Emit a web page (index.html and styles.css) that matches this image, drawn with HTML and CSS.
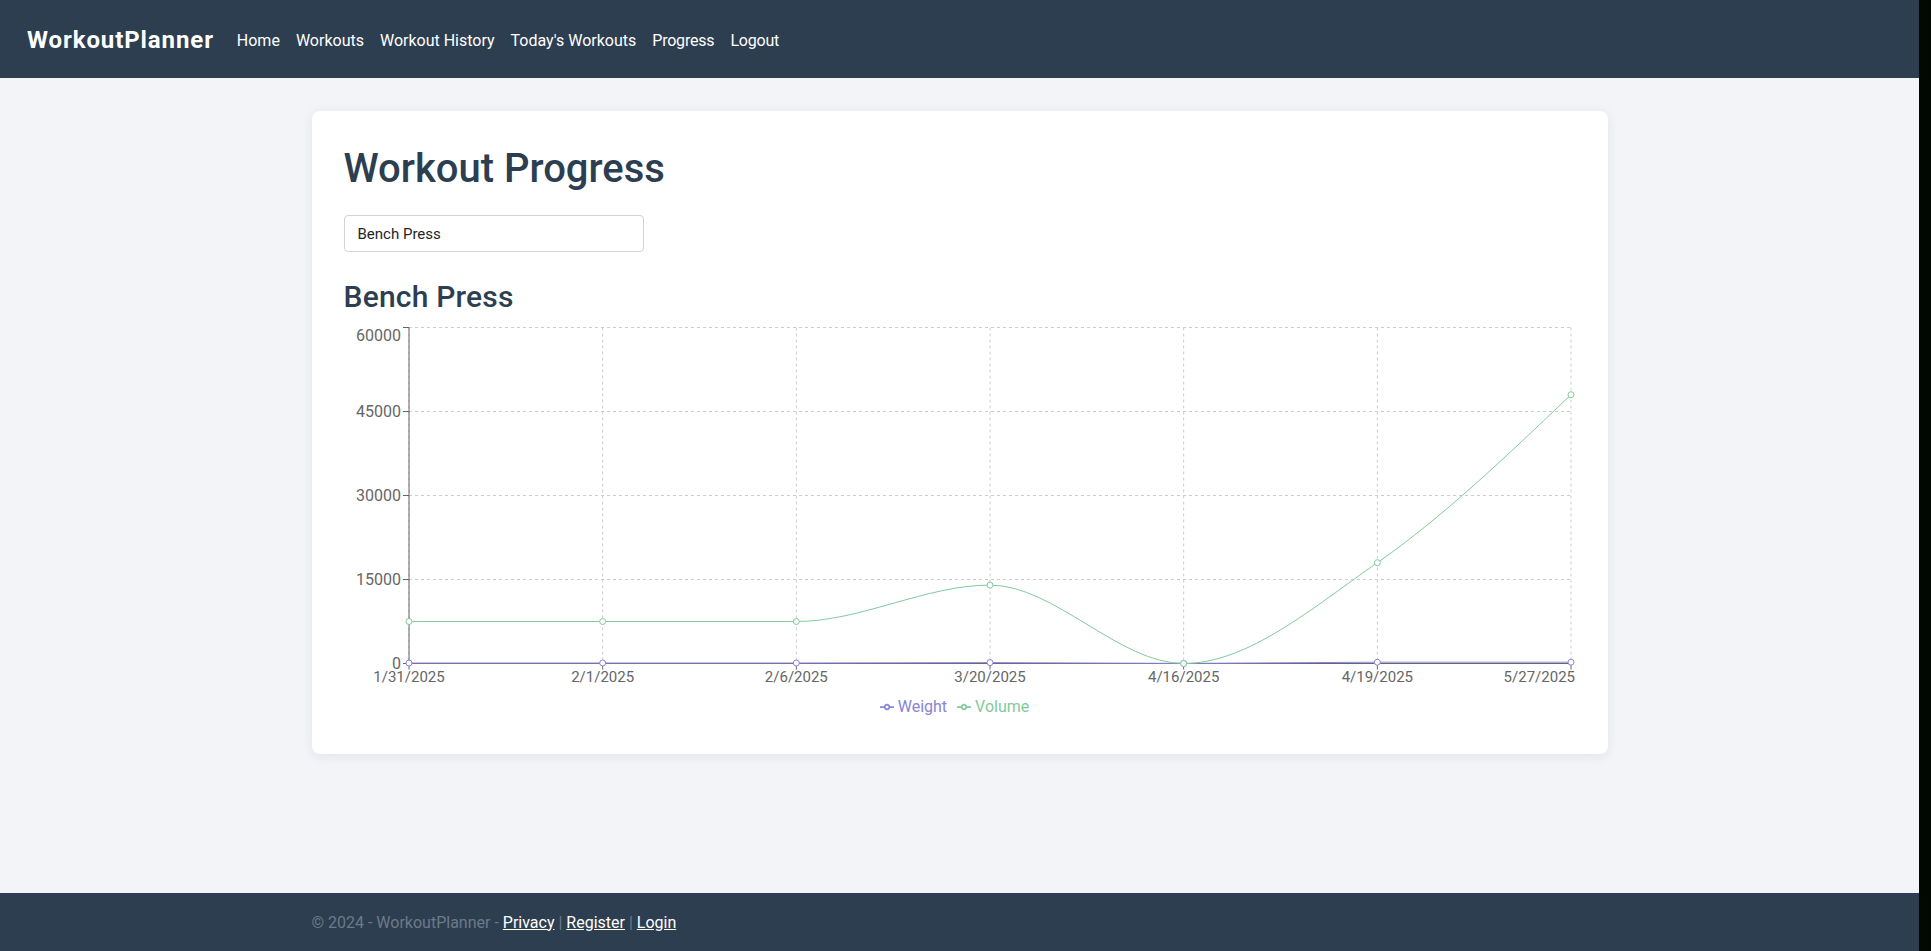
FILE: index.html
```html
<!DOCTYPE html>
<html lang="en">
<head>
<meta charset="utf-8">
<title>Progress - WorkoutPlanner</title>
<link rel="stylesheet" href="styles.css">
</head>
<body>
<div class="page">
  <header class="topbar">
    <a class="brand" href="#">WorkoutPlanner</a>
    <nav class="nav">
      <a href="#">Home</a>
      <a href="#">Workouts</a>
      <a href="#">Workout History</a>
      <a href="#">Today's Workouts</a>
      <a href="#">Progress</a>
      <a href="#">Logout</a>
    </nav>
  </header>

  <main class="main">
    <section class="card">
      <h1 class="title">Workout Progress</h1>
      <div class="select">Bench Press</div>
      <h3 class="subtitle">Bench Press</h3>

      <div class="chart">
        <svg class="chart-svg" width="1232" height="371" viewBox="0 0 1232 371">
          <g class="grid">
            <line x1="65" y1="5.5" x2="1227" y2="5.5"/>
            <line x1="65" y1="89.5" x2="1227" y2="89.5"/>
            <line x1="65" y1="173.5" x2="1227" y2="173.5"/>
            <line x1="65" y1="257.5" x2="1227" y2="257.5"/>
            <line x1="65" y1="341.5" x2="1227" y2="341.5"/>
            <line x1="65" y1="5.5" x2="65" y2="341.5"/>
            <line x1="258.67" y1="5.5" x2="258.67" y2="341.5"/>
            <line x1="452.33" y1="5.5" x2="452.33" y2="341.5"/>
            <line x1="646" y1="5.5" x2="646" y2="341.5"/>
            <line x1="839.67" y1="5.5" x2="839.67" y2="341.5"/>
            <line x1="1033.33" y1="5.5" x2="1033.33" y2="341.5"/>
            <line x1="1227" y1="5.5" x2="1227" y2="341.5"/>
          </g>

          <g class="axis">
            <line x1="65" y1="341.5" x2="1227" y2="341.5"/>
            <line x1="65" y1="347.5" x2="65" y2="341.5"/>
            <line x1="258.67" y1="347.5" x2="258.67" y2="341.5"/>
            <line x1="452.33" y1="347.5" x2="452.33" y2="341.5"/>
            <line x1="646" y1="347.5" x2="646" y2="341.5"/>
            <line x1="839.67" y1="347.5" x2="839.67" y2="341.5"/>
            <line x1="1033.33" y1="347.5" x2="1033.33" y2="341.5"/>
            <line x1="1227" y1="347.5" x2="1227" y2="341.5"/>

            <line x1="65" y1="5.5" x2="65" y2="341.5"/>
            <line x1="59" y1="341.5" x2="65" y2="341.5"/>
            <line x1="59" y1="257.5" x2="65" y2="257.5"/>
            <line x1="59" y1="173.5" x2="65" y2="173.5"/>
            <line x1="59" y1="89.5" x2="65" y2="89.5"/>
            <line x1="59" y1="5.5" x2="65" y2="5.5"/>
          </g>

          <g class="ticks x-ticks">
            <text x="65" y="349.5" dy="0.71em">1/31/2025</text>
            <text x="258.67" y="349.5" dy="0.71em">2/1/2025</text>
            <text x="452.33" y="349.5" dy="0.71em">2/6/2025</text>
            <text x="646" y="349.5" dy="0.71em">3/20/2025</text>
            <text x="839.67" y="349.5" dy="0.71em">4/16/2025</text>
            <text x="1033.33" y="349.5" dy="0.71em">4/19/2025</text>
            <text class="tick-end" x="1231" y="349.5" dy="0.71em">5/27/2025</text>
          </g>

          <g class="ticks y-ticks">
            <text x="57" y="341.5" dy="0.355em">0</text>
            <text x="57" y="257.5" dy="0.355em">15000</text>
            <text x="57" y="173.5" dy="0.355em">30000</text>
            <text x="57" y="89.5" dy="0.355em">45000</text>
            <text x="57" y="13" dy="0.355em">60000</text>
          </g>

          <path class="line-weight" d="M65,341 L258.67,341 L452.33,341 L646,340.6 L839.67,341.4 L1033.33,340.2 L1227,340.2"/>
          <g class="dots-weight">
            <circle cx="65" cy="341" r="3"/>
            <circle cx="258.67" cy="341" r="3"/>
            <circle cx="452.33" cy="341" r="3"/>
            <circle cx="646" cy="340.6" r="3"/>
            <circle cx="839.67" cy="341.4" r="3"/>
            <circle cx="1033.33" cy="340.2" r="3"/>
            <circle cx="1227" cy="340.2" r="3"/>
          </g>

          <path class="line-volume" d="M65,299.5 C129.56,299.5 194.11,299.5 258.67,299.5 C323.22,299.5 387.78,299.5 452.33,299.5 C516.89,299.5 581.44,263.1 646,263.1 C710.56,263.1 775.11,341.5 839.67,341.5 C904.22,341.5 968.78,285.5 1033.33,240.7 C1097.89,195.9 1162.44,134.3 1227,72.7"/>
          <g class="dots-volume">
            <circle cx="65" cy="299.5" r="3"/>
            <circle cx="258.67" cy="299.5" r="3"/>
            <circle cx="452.33" cy="299.5" r="3"/>
            <circle cx="646" cy="263.1" r="3"/>
            <circle cx="839.67" cy="341.5" r="3"/>
            <circle cx="1033.33" cy="240.7" r="3"/>
            <circle cx="1227" cy="72.7" r="3"/>
          </g>
        </svg>

        <ul class="legend">
          <li class="legend-item legend-weight">
            <svg class="legend-icon" width="14" height="14" viewBox="0 0 32 32"><path d="M0,16h10.67A5.33,5.33,0,1,1,21.33,16H32M21.33,16A5.33,5.33,0,1,1,10.67,16"/></svg>
            <span>Weight</span>
          </li>
          <li class="legend-item legend-volume">
            <svg class="legend-icon" width="14" height="14" viewBox="0 0 32 32"><path d="M0,16h10.67A5.33,5.33,0,1,1,21.33,16H32M21.33,16A5.33,5.33,0,1,1,10.67,16"/></svg>
            <span>Volume</span>
          </li>
        </ul>
      </div>
    </section>
  </main>

  <footer class="footer">
    <div class="footer-inner"><span class="muted">© 2024 - WorkoutPlanner -&nbsp;</span><a href="#">Privacy</a><span class="muted">&nbsp;|&nbsp;</span><a href="#">Register</a><span class="muted">&nbsp;|&nbsp;</span><a href="#">Login</a></div>
  </footer>
</div>
<div class="desk-strip"></div>
</body>
</html>
```

FILE: styles.css
```css
* {
  box-sizing: border-box;
}

html, body {
  margin: 0;
  padding: 0;
  height: 100%;
}

body {
  display: flex;
  background: #020a03;
  font-family: "Segoe UI", Roboto, "Noto Sans", sans-serif;
  font-size: 16px;
  color: #212529;
}

.page {
  flex: 1;
  min-width: 0;
  min-height: 100vh;
  display: flex;
  flex-direction: column;
  background: #f3f4f8;
}

.desk-strip {
  width: 12px;
  flex: none;
  background: #010801;
}

/* ---------- header ---------- */
.topbar {
  height: 78px;
  flex: none;
  background: #2d3e50;
  display: flex;
  align-items: center;
  padding: 2px 0 0 27px;
}

.brand {
  color: #fff;
  font-weight: 700;
  font-size: 24px;
  text-decoration: none;
  margin-right: 15px;
  letter-spacing: 0.9px;
}

.nav {
  display: flex;
}

.nav a {
  color: #fff;
  text-decoration: none;
  font-size: 16px;
  padding: 8px 8px;
}

.nav a:nth-child(n+5) {
  letter-spacing: -0.2px;
}

/* ---------- main ---------- */
.main {
  flex: 1;
  padding-top: 33px;
  display: flex;
  justify-content: center;
  align-items: flex-start;
}

.card {
  width: 1296px;
  background: #fff;
  border-radius: 8px;
  box-shadow: 0 2px 12px rgba(30, 40, 70, 0.08);
  padding: 32px 32px 32px;
}

.title {
  margin: 0 0 22px;
  padding-top: 2px;
  font-size: 40px;
  line-height: 48px;
  font-weight: 500;
  color: #2c3e50;
}

.select {
  width: 300px;
  height: 37px;
  border: 1px solid #ced4da;
  border-radius: 4px;
  padding: 0 13px;
  display: flex;
  align-items: center;
  font-size: 15px;
  color: #212529;
  background: #fff;
}

.subtitle {
  margin: 28px 0 8px;
  font-size: 30px;
  line-height: 34px;
  font-weight: 500;
  letter-spacing: 0.2px;
  color: #2c3e50;
}

/* ---------- chart ---------- */
.chart {
  height: 400px;
  display: flex;
  flex-direction: column;
}

.chart-svg {
  display: block;
  overflow: visible;
  flex: none;
}

.grid line {
  stroke: #ccc;
  stroke-dasharray: 3 3;
  stroke-width: 1;
}

.axis line {
  stroke: #666;
  stroke-width: 1;
}

.ticks text {
  fill: #666;
  font-size: 15px;
}

.x-ticks text {
  text-anchor: middle;
}

.x-ticks text.tick-end {
  text-anchor: end;
}

.y-ticks text {
  text-anchor: end;
  font-size: 16px;
}

.line-weight {
  fill: none;
  stroke: #8884d8;
  stroke-width: 1;
}

.dots-weight circle {
  fill: #fff;
  stroke: #8884d8;
  stroke-width: 1;
}

.line-volume {
  fill: none;
  stroke: #82ca9d;
  stroke-width: 1;
}

.dots-volume circle {
  fill: #fff;
  stroke: #82ca9d;
  stroke-width: 1;
}

.legend {
  list-style: none;
  margin: 0;
  padding: 3px 0 0;
  height: 24px;
  display: flex;
  justify-content: center;
  align-items: center;
}

.legend-item {
  display: flex;
  align-items: center;
  margin-right: 10px;
  font-size: 16px;
}

.legend-icon {
  margin-right: 4px;
  flex: none;
}

.legend-icon path {
  fill: none;
  stroke-width: 4;
}

.legend-weight {
  color: #8884d8;
}

.legend-weight path {
  stroke: #8884d8;
}

.legend-volume {
  color: #82ca9d;
}

.legend-volume path {
  stroke: #82ca9d;
}

/* ---------- footer ---------- */
.footer {
  height: 58px;
  flex: none;
  background: #2d3e50;
  display: flex;
  align-items: center;
  justify-content: center;
}

.footer-inner {
  width: 1296px;
  font-size: 16px;
}

.footer .muted {
  color: #6c7a89;
}

.footer a {
  color: #fff;
  text-decoration: underline;
}
```
